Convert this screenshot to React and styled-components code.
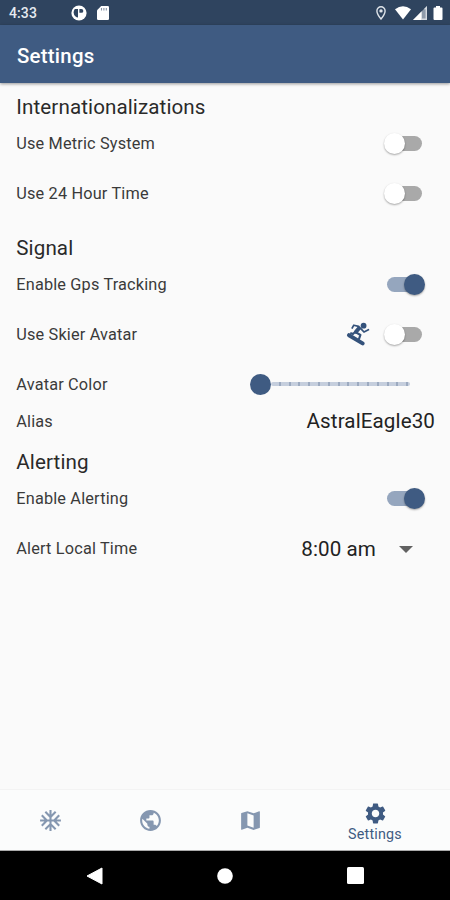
import React, { useState } from "react";
import styled, { createGlobalStyle } from "styled-components";
import { MdAcUnit, MdPublic, MdMap, MdSettings } from "react-icons/md";

const GlobalStyle = createGlobalStyle`
  body {
    margin: 0;
    background: #fafafa;
    font-family: Roboto, "Liberation Sans", sans-serif;
  }
  svg {
    display: block;
  }
`;

const Screen = styled.div`
  width: 450px;
  height: 900px;
  display: flex;
  flex-direction: column;
  overflow: hidden;
  background: #fafafa;
  color: #2a2a2a;
`;

const StatusBar = styled.header`
  display: flex;
  align-items: center;
  height: 25px;
  flex: none;
  box-sizing: border-box;
  padding: 1px 7px 0 9px;
  background: #2f445f;
  color: #fff;
`;

const Clock = styled.span`
  width: 62px;
  font-size: 14px;
  font-weight: 500;
  letter-spacing: 0.1px;
  color: #e6eaf0;
`;

const StatusIcons = styled.div`
  display: flex;
  align-items: center;
  gap: ${(props) => props.$gap}px;
  margin-left: ${(props) => (props.$end ? "auto" : "0")};
`;

const AppBar = styled.div`
  position: relative;
  display: flex;
  align-items: center;
  height: 58px;
  flex: none;
  box-sizing: border-box;
  padding: 3px 17px 0;
  background: #3f5b82;
  box-shadow: 0 1px 3px rgba(0, 0, 0, 0.4);
`;

const Title = styled.h1`
  margin: 0;
  font-size: 20.4px;
  font-weight: 500;
  letter-spacing: 0.25px;
  color: #fff;
`;

const Content = styled.main`
  flex: 1;
  display: flex;
  flex-direction: column;
  gap: 16px;
  padding: 11px 15px 0 16.3px;
`;

const Heading = styled.h2`
  margin: 0;
  height: 24.5px;
  line-height: 27px;
  font-size: 20.6px;
  font-weight: 400;
  letter-spacing: 0.1px;
`;

const Row = styled.div`
  display: flex;
  align-items: center;
  height: ${(props) => (props.$short ? 24 : 50)}px;
  padding-right: ${(props) => props.$end || 0}px;
`;

const Label = styled.span`
  flex: 1;
  font-size: 16.3px;
  letter-spacing: 0.17px;
  color: #3a3a3a;
`;

const Value = styled.span`
  font-size: 20.6px;
  letter-spacing: 0.1px;
  color: #222;
`;

const Track = styled.button`
  position: relative;
  width: 35px;
  height: 15px;
  margin: 0 13px 0 0;
  padding: 0;
  border: 0;
  border-radius: 8px;
  background: ${(props) => (props.$on ? "#95a6be" : "#a9a9a9")};
`;

const Knob = styled.span`
  position: absolute;
  top: -3px;
  left: ${(props) => (props.$on ? 17 : -3)}px;
  width: 21px;
  height: 21px;
  border-radius: 50%;
  background: ${(props) => (props.$on ? "#3f5b82" : "#fff")};
  box-shadow: 0 1px 2px rgba(0, 0, 0, 0.35);
`;

const Avatar = styled.span`
  margin-right: 17px;
  color: #34527b;
`;

const Slider = styled.div`
  display: flex;
  align-items: center;
  width: 160.5px;
`;

const Thumb = styled.span`
  width: 21px;
  height: 21px;
  border-radius: 50%;
  background: #3f5b82;
`;

const SliderLine = styled.span`
  flex: 1;
  height: 4px;
  border-radius: 2px;
  background: repeating-linear-gradient(
    90deg,
    #c5cedd 0 7.8px,
    #9caac0 7.8px 9.8px
  );
`;

const Arrow = styled.span`
  margin: 1px 0 0 23px;
  border: 7.5px solid transparent;
  border-top-color: #616161;
  border-bottom: 0;
`;

const TabBar = styled.nav`
  display: flex;
  flex: none;
  box-sizing: border-box;
  height: 62px;
  border-top: 1px solid #f3f3f3;
  border-bottom: 1px solid #aaa;
  background: #fbfcfc;
`;

const Tab = styled.div`
  flex: ${(props) => (props.$active ? "0 0 150px" : "0 0 100px")};
  display: flex;
  flex-direction: column;
  align-items: center;
  justify-content: center;
  box-sizing: border-box;
  padding-top: ${(props) => (props.$active ? 4 : 0)}px;
  color: ${(props) => (props.$active ? "#3f5b82" : "#8597b0")};
`;

const TabLabel = styled.span`
  font-size: 14.3px;
  line-height: 17px;
  letter-spacing: 0.2px;
`;

const SystemNav = styled.footer`
  display: flex;
  align-items: center;
  justify-content: space-between;
  flex: none;
  height: 49px;
  box-sizing: border-box;
  padding: 0 86px;
  background: #000;
`;

function Toggle({ initial }) {
  const [on, setOn] = useState(initial);
  return (
    <Track $on={on} onClick={() => setOn(!on)}>
      <Knob $on={on} />
    </Track>
  );
}

function SnowboarderIcon() {
  return (
    <svg
      width="24"
      height="24"
      viewBox="0 0 24 24"
      fill="none"
      stroke="currentColor"
      strokeLinecap="round"
      strokeLinejoin="round"
    >
      <circle cx="17.6" cy="3.7" r="2.9" fill="currentColor" stroke="none" />
      <path d="M6.2 6L7.8 3.2L12.6 4.4" strokeWidth="1.7" />
      <path d="M13 6.2L10 9.8" strokeWidth="4" />
      <path d="M14.8 6.6L18 10L22.4 7.8" strokeWidth="1.8" />
      <path d="M9 10L7 12L5 11.2" strokeWidth="2" />
      <path d="M10.4 10.6L14.4 13L13 17" strokeWidth="2.2" />
      <path d="M3 13.2L16.6 21.4" strokeWidth="4" />
    </svg>
  );
}

function App() {
  return (
    <>
      <GlobalStyle />
      <Screen>
        <StatusBar>
          <Clock>4:33</Clock>
          <StatusIcons $gap={10}>
            <svg width="16" height="16" viewBox="0 0 16 16">
              <circle cx="8" cy="8" r="7.6" fill="#fff" />
              <path d="M3.8 4H7V12.6A5.4 5.4 0 0 1 3.8 4Z" fill="#2f445f" />
              <path d="M8.4 4H10.4A1.8 1.8 0 0 1 10.4 7.8H8.4Z" fill="#2f445f" />
            </svg>
            <svg width="12" height="14" viewBox="0 0 12 14">
              <path d="M4.2 0H10.7Q12 0 12 1.3V12.7Q12 14 10.7 14H1.3Q0 14 0 12.7V4.2Z" fill="#fff" />
              <path d="M4.5 2V4.5M6.9 2V4.5M9.3 2V4.5" stroke="#8794a5" strokeWidth="1.1" />
            </svg>
          </StatusIcons>
          <StatusIcons $gap={2} $end>
            <svg width="17" height="14" viewBox="0 0 17 14">
              <path
                d="M5 .8A4.1 4.1 0 0 0 .9 4.9C.9 8 5 13 5 13S9.1 8 9.1 4.9A4.1 4.1 0 0 0 5 .8Z"
                fill="none"
                stroke="#dfe4ea"
                strokeWidth="1.4"
              />
              <circle cx="5" cy="4.9" r="1.7" fill="#dfe4ea" />
            </svg>
            <svg width="16" height="14" viewBox="0 0 16 14">
              <path d="M0 3.2Q8-2.8 16 3.2L8 13.5Z" fill="#fff" />
            </svg>
            <svg width="14" height="14" viewBox="0 0 14 14">
              <path d="M14 0V14H0Z" fill="#8f9bab" />
              <path d="M8.7 5.3V14H0Z" fill="#fff" />
              <path d="M14 0V14H9V12.6H12.6V3.2H10.8Z" fill="#d5dae1" />
            </svg>
            <svg width="14" height="14" viewBox="0 0 14 14">
              <path d="M7 0H11V1.5H12.5Q13.5 1.5 13.5 2.5V13Q13.5 14 12.5 14H5.5Q4.5 14 4.5 13V2.5Q4.5 1.5 5.5 1.5H7Z" fill="#fff" />
            </svg>
          </StatusIcons>
        </StatusBar>
        <AppBar>
          <Title>Settings</Title>
        </AppBar>

        <Content>
          <section>
            <Heading>Internationalizations</Heading>
            <Row>
              <Label>Use Metric System</Label>
              <Toggle initial={false} />
            </Row>
            <Row>
              <Label>Use 24 Hour Time</Label>
              <Toggle initial={false} />
            </Row>
          </section>

          <section>
            <Heading>Signal</Heading>
            <Row>
              <Label>Enable Gps Tracking</Label>
              <Toggle initial={true} />
            </Row>
            <Row>
              <Label>Use Skier Avatar</Label>
              <Avatar>
                <SnowboarderIcon />
              </Avatar>
              <Toggle initial={false} />
            </Row>
            <Row $end={25}>
              <Label>Avatar Color</Label>
              <Slider>
                <Thumb />
                <SliderLine />
              </Slider>
            </Row>
            <Row $short>
              <Label>Alias</Label>
              <Value>AstralEagle30</Value>
            </Row>
          </section>

          <section>
            <Heading>Alerting</Heading>
            <Row>
              <Label>Enable Alerting</Label>
              <Toggle initial={true} />
            </Row>
            <Row $end={22}>
              <Label>Alert Local Time</Label>
              <Value>8:00 am</Value>
              <Arrow />
            </Row>
          </section>
        </Content>

        <TabBar>
          <Tab>
            <MdAcUnit size={25} />
          </Tab>
          <Tab>
            <MdPublic size={25} />
          </Tab>
          <Tab>
            <MdMap size={25} />
          </Tab>
          <Tab $active>
            <MdSettings size={25} />
            <TabLabel>Settings</TabLabel>
          </Tab>
        </TabBar>

        <SystemNav>
          <svg width="17" height="18" viewBox="0 0 17 18">
            <path d="M16 1V17L1 9Z" fill="#fff" stroke="#fff" strokeLinejoin="round" />
          </svg>
          <svg width="16" height="16" viewBox="0 0 16 16">
            <circle cx="8" cy="8" r="7.8" fill="#fff" />
          </svg>
          <svg width="17" height="17" viewBox="0 0 17 17">
            <rect width="17" height="17" rx="1.5" fill="#fff" />
          </svg>
        </SystemNav>
      </Screen>
    </>
  );
}

export default App;
